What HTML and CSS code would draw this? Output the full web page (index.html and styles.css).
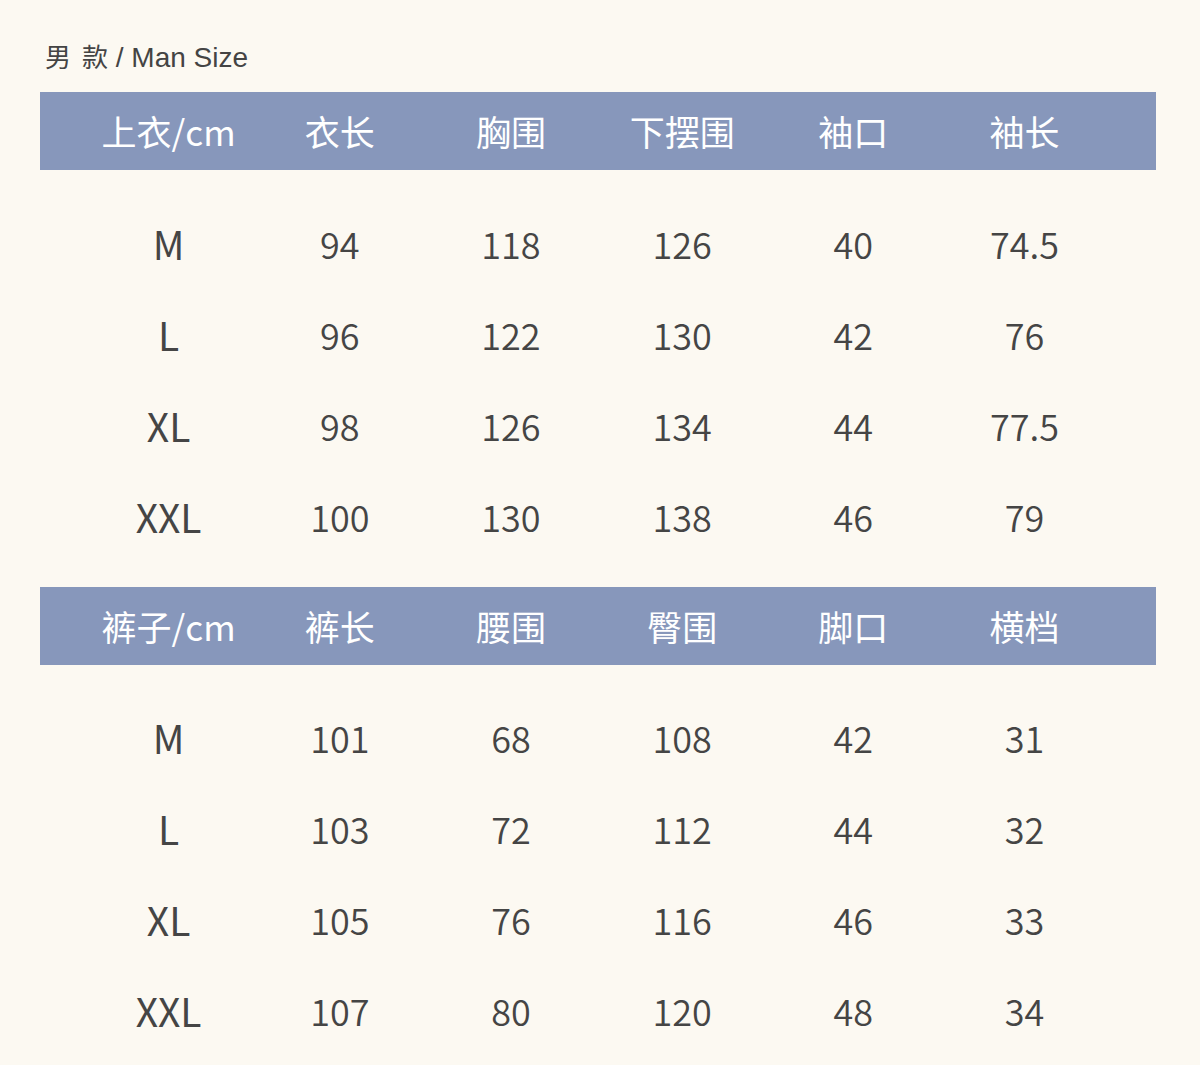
FILE: index.html
```html
<!DOCTYPE html>
<html lang="zh">
<head>
<meta charset="utf-8">
<title>Man Size</title>
<link rel="stylesheet" href="styles.css">
</head>
<body>
<div class="page">
  <div class="title"><span class="cjk">男</span><span class="cjk gap">款</span> / Man Size</div>

  <section class="table">
    <div class="row head">
      <div>上衣/cm</div><div>衣长</div><div>胸围</div><div>下摆围</div><div>袖口</div><div>袖长</div>
    </div>
    <div class="body">
      <div class="row"><div class="size">M</div><div>94</div><div>118</div><div>126</div><div>40</div><div>74.5</div></div>
      <div class="row"><div class="size">L</div><div>96</div><div>122</div><div>130</div><div>42</div><div>76</div></div>
      <div class="row"><div class="size">XL</div><div>98</div><div>126</div><div>134</div><div>44</div><div>77.5</div></div>
      <div class="row"><div class="size">XXL</div><div>100</div><div>130</div><div>138</div><div>46</div><div>79</div></div>
    </div>
  </section>

  <section class="table second">
    <div class="row head">
      <div>裤子/cm</div><div>裤长</div><div>腰围</div><div>臀围</div><div>脚口</div><div>横档</div>
    </div>
    <div class="body">
      <div class="row"><div class="size">M</div><div>101</div><div>68</div><div>108</div><div>42</div><div>31</div></div>
      <div class="row"><div class="size">L</div><div>103</div><div>72</div><div>112</div><div>44</div><div>32</div></div>
      <div class="row"><div class="size">XL</div><div>105</div><div>76</div><div>116</div><div>46</div><div>33</div></div>
      <div class="row"><div class="size">XXL</div><div>107</div><div>80</div><div>120</div><div>48</div><div>34</div></div>
    </div>
  </section>
</div>
</body>
</html>
```

FILE: styles.css
```css
html, body {
  margin: 0;
  padding: 0;
  background: #fcf9f2;
}

.page {
  width: 1116px;
  padding: 40px 0 0 40px;
  color: #454545;
  font-family: "Noto Sans CJK SC", "Noto Sans", sans-serif;
}

.title {
  font-family: "Liberation Sans", "Noto Sans CJK SC", sans-serif;
  font-size: 28px;
  line-height: 32px;
  height: 32px;
  padding-left: 5px;
  margin-bottom: 20px;
  color: #444;
}

.title .cjk {
  font-family: "Noto Sans CJK SC", sans-serif;
  font-size: 26px;
}

.title .gap {
  margin-left: 11px;
}

.table + .table {
  margin-top: 25px;
}

.row {
  display: grid;
  grid-template-columns: repeat(6, 171.2px);
  padding-left: 43px;
  align-items: center;
  justify-items: center;
}

.head {
  background: #8797bb;
  height: 78px;
  color: #fff;
  font-size: 35px;
  line-height: 78px;
}

.body {
  padding-top: 28px;
}

.second .body {
  padding-top: 27px;
}

.body .row {
  height: 91px;
  font-size: 36px;
  font-weight: 350;
  line-height: 91px;
}

.size {
  font-size: 39px;
  font-weight: 400;
}
```
